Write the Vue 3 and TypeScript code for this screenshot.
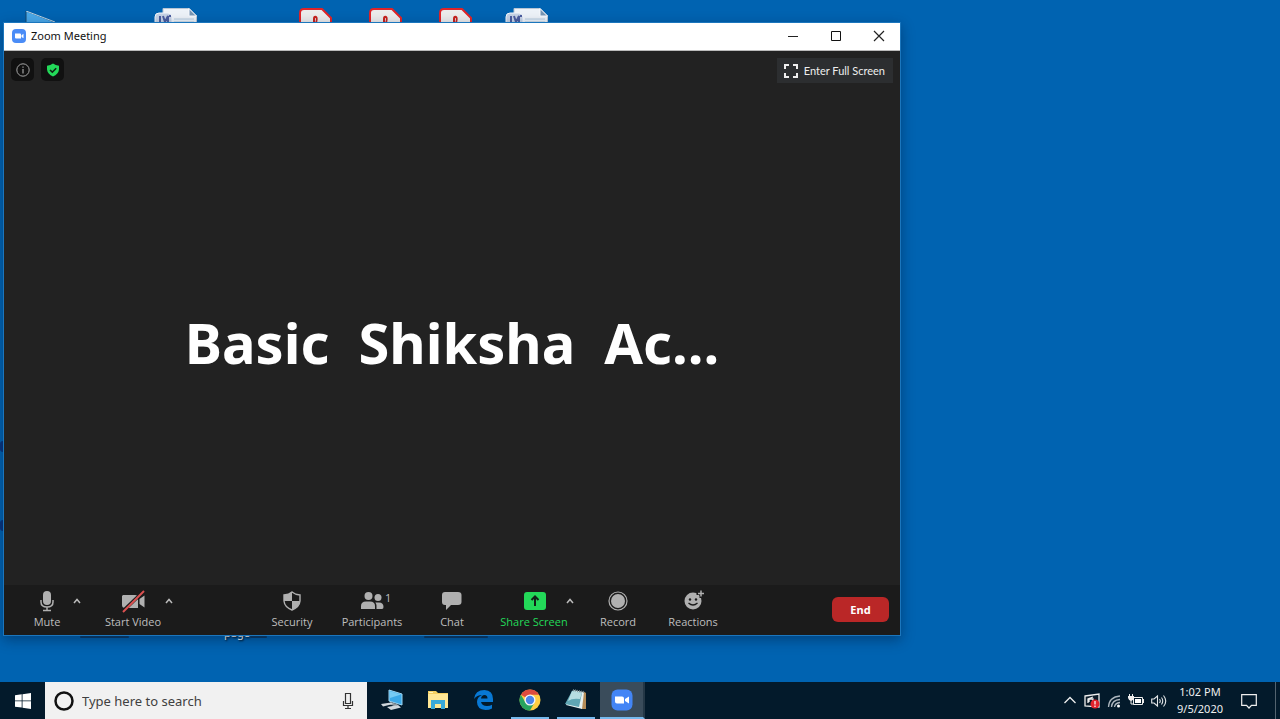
<script setup lang="ts">
import { ref } from 'vue'

const query = ref('')
const participantCount = 1
const displayName = 'Basic  Shiksha  Ac...'
const pdfShortcuts = ['pdf-one', 'pdf-two', 'pdf-three']
const wordShortcuts = ['word-one', 'word-two']
</script>

<template>
  <div class="screen">
    <main class="desktop">
      <svg class="shortcut player" width="32" height="24" viewBox="0 0 32 24">
        <path d="M1 0 32 12 1 24Z" fill="#4aa8e8" stroke="#16486f" />
        <path d="M1 0 30 11" stroke="#b9d5e8" />
      </svg>
      <svg v-for="s in wordShortcuts" :key="s" class="shortcut" :class="s" width="44" height="34" viewBox="0 0 44 34">
        <path d="M9 .5H35L42.500 8V34H9Z" fill="#edf2f8" stroke="#b8c5d4" />
        <path d="M35 .5V8H42.500Z" fill="#7896b4" stroke="#f8faff" />
        <path d="M20 11H40M20 14H40" stroke="#b4ccdf" />
        <rect x="1" y="5" width="17" height="20" rx="4" fill="#c5d2e6" stroke="#f1f5fb" />
        <path d="M6 8V14M9 8 11 14 14 8V14M15 8H17" fill="none" stroke="#4b5d9f" stroke-width="2" />
      </svg>
      <svg v-for="s in pdfShortcuts" :key="s" class="shortcut" :class="s" width="34" height="40" viewBox="0 0 34 40">
        <path d="M5 1H23L32 10V40H1V5Q1 1 5 1Z" fill="#ececec" stroke="#df2429" stroke-width="2" />
        <path d="M15 18V11Q15 8 17 9Q19 10 16 18" fill="none" stroke="#c8201d" stroke-width="2" />
      </svg>
      <span class="mark mark-a"></span>
      <span class="mark mark-b"></span>
      <span class="caption">page</span>

      <section class="window">
        <header class="titlebar">
          <svg width="14" height="14" viewBox="0 0 14 14">
            <rect width="14" height="14" rx="4" fill="#4a8cf7" />
            <path d="M3 4.500H8Q9 4.500 9 5.500V9.500H4Q3 9.500 3 8.500ZM9.500 6.200 11.500 4.800V9.200L9.500 7.900Z" fill="#fff" />
          </svg>
          <h1>Zoom Meeting</h1>
          <button class="caption-button" aria-label="Minimize">
            <svg width="12" height="12" viewBox="0 0 12 12"><path d="M1 6.500H11" stroke="#222" /></svg>
          </button>
          <button class="caption-button" aria-label="Maximize">
            <svg width="12" height="12" viewBox="0 0 12 12"><path d="M1.500 1.500H10.500V10.500H1.500Z" fill="none" stroke="#111" /></svg>
          </button>
          <button class="caption-button" aria-label="Close">
            <svg width="12" height="12" viewBox="0 0 12 12"><path d="M1 1 11 11M11 1 1 11" stroke="#222" stroke-width="1.200" /></svg>
          </button>
        </header>

        <div class="stage">
          <div class="stage-top">
            <button class="chip" aria-label="Meeting information">
              <svg width="14" height="14" viewBox="0 0 14 14">
                <circle cx="7" cy="7" r="6.200" fill="none" stroke="#a5a5a5" />
                <path d="M7 6V10.500M7 3.500V4.800" stroke="#a5a5a5" stroke-width="1.200" />
              </svg>
            </button>
            <button class="chip" aria-label="Encryption">
              <svg width="14" height="14" viewBox="0 0 14 14">
                <path d="M7 .5Q9.500 2.500 13 2.700V6.500Q12.500 11 7 13.500Q1.500 11 1 6.500V2.700Q4.500 2.500 7 .5Z" fill="#23d959" />
                <path d="M4 7 6.300 9.200 10.200 5.200" fill="none" stroke="#102015" stroke-width="1.600" />
              </svg>
            </button>
            <button class="fullscreen">
              <svg width="14" height="14" viewBox="0 0 14 14">
                <path d="M1 5V1H5M9 1H13V5M13 9V13H9M5 13H1V9" fill="none" stroke="#eee" stroke-width="2" />
              </svg>
              <span>Enter Full Screen</span>
            </button>
          </div>
          <p class="name">{{ displayName }}</p>
        </div>

        <footer class="toolbar">
          <div class="group">
            <button class="tool tool-mute">
              <svg width="24" height="24" viewBox="0 0 24 24">
                <rect x="8" y="2" width="8" height="14" rx="4" fill="#b0b0b0" />
                <path d="M6 11V13Q6 18 12 18Q18 18 18 13V11M12 18V21M8 21.500H16" fill="none" stroke="#b0b0b0" stroke-width="1.500" />
              </svg>
              <span>Mute</span>
            </button>
            <button class="caret" aria-label="Audio options">
              <svg width="8" height="6" viewBox="0 0 8 6"><path d="M1 5 4 1.500 7 5" fill="none" stroke="#bbb" stroke-width="1.500" /></svg>
            </button>
            <button class="tool tool-video">
              <svg width="26" height="24" viewBox="0 0 26 24">
                <path d="M3 6H15Q18 6 18 9V19H5Q2 19 2 16V7ZM19.500 10 24.500 6.500V18.500L19.500 15Z" fill="#b0b0b0" />
                <path d="M3 22 24 2" stroke="#1b1b1b" stroke-width="3.500" />
                <path d="M3 23 24 2" stroke="#dc5151" stroke-width="2" />
              </svg>
              <span>Start Video</span>
            </button>
            <button class="caret" aria-label="Video options">
              <svg width="8" height="6" viewBox="0 0 8 6"><path d="M1 5 4 1.500 7 5" fill="none" stroke="#bbb" stroke-width="1.500" /></svg>
            </button>
          </div>

          <div class="group group-main">
            <button class="tool">
              <svg width="24" height="24" viewBox="0 0 24 24">
                <path d="M12 3Q15 5.500 20 6V12Q19.500 18 12 21Q4.500 18 4 12V6Q9 5.500 12 3Z" fill="#1b1b1b" stroke="#b0b0b0" stroke-width="1.400" />
                <path d="M12 3V12H4V6Q9 5.500 12 3ZM12 12H20Q19.500 18 12 21Z" fill="#b0b0b0" />
              </svg>
              <span>Security</span>
            </button>
            <button class="tool">
              <span class="people">
                <svg width="24" height="24" viewBox="0 0 24 24">
                  <circle cx="8.500" cy="7" r="4" fill="#b0b0b0" />
                  <circle cx="18" cy="8.500" r="3.500" fill="#b0b0b0" />
                  <path d="M1 20V17Q1 12.500 6 12.500H10Q15 12.500 15 17V20ZM16.500 20V16.500Q16.500 15 15.300 13.500H19Q23.500 13.500 23.500 18Q23.500 20 22 20Z" fill="#b0b0b0" />
                </svg>
                <span class="count">{{ participantCount }}</span>
              </span>
              <span>Participants</span>
            </button>
            <button class="tool">
              <svg width="24" height="24" viewBox="0 0 24 24">
                <path d="M5 3H18Q21.500 3 21.500 6V13Q21.500 16 18 16H11L6 21V16H5Q2 16 2 13V6Q2 3 5 3Z" fill="#b0b0b0" />
              </svg>
              <span>Chat</span>
            </button>
            <button class="tool tool-share">
              <svg width="24" height="24" viewBox="0 0 24 24">
                <rect x="2" y="3" width="22" height="18" rx="3" fill="#23d959" />
                <path d="M13 17V8M9.500 11 13 7.500 16.500 11" fill="none" stroke="#132019" stroke-width="2" />
              </svg>
              <span>Share Screen</span>
            </button>
            <button class="caret caret-share" aria-label="Share options">
              <svg width="8" height="6" viewBox="0 0 8 6"><path d="M1 5 4 1.500 7 5" fill="none" stroke="#bbb" stroke-width="1.500" /></svg>
            </button>
            <button class="tool">
              <svg width="24" height="24" viewBox="0 0 24 24">
                <circle cx="12" cy="12" r="9" fill="none" stroke="#b0b0b0" stroke-width="1.200" />
                <circle cx="12" cy="12" r="7" fill="#b0b0b0" />
              </svg>
              <span>Record</span>
            </button>
            <button class="tool tool-reactions">
              <svg width="24" height="24" viewBox="0 0 24 24">
                <circle cx="12" cy="12" r="8.500" fill="#b0b0b0" />
                <circle cx="9" cy="10.500" r="1.200" fill="#1b1b1b" />
                <circle cx="15" cy="10.500" r="1.200" fill="#1b1b1b" />
                <path d="M7.500 14Q12 18 16.500 14" fill="none" stroke="#1b1b1b" stroke-width="1.300" />
                <path d="M20 0V9M15.500 4.500H24" stroke="#1b1b1b" stroke-width="3" />
                <path d="M20 1.500V7.500M17 4.500H23" stroke="#b0b0b0" stroke-width="1.500" />
              </svg>
              <span>Reactions</span>
            </button>
          </div>
          <button class="end">End</button>
        </footer>
      </section>
      <span class="smudge smudge-a"></span>
      <span class="smudge smudge-b"></span>
      <span class="smudge smudge-c"></span>
    </main>

    <nav class="taskbar">
      <button class="start" aria-label="Start">
        <svg width="16" height="16" viewBox="0 0 16 16">
          <path d="M0 2.300 6.700 1.300V7.500H0ZM7.500 1.200 16 0V7.500H7.500ZM0 8.300H6.700V14.600L0 13.700ZM7.500 8.300H16V16L7.500 14.700Z" fill="#fff" />
        </svg>
      </button>
      <label class="search">
        <svg width="22" height="22" viewBox="0 0 22 22"><circle cx="11" cy="11" r="8.500" fill="none" stroke="#111" stroke-width="2.500" /></svg>
        <input v-model="query" type="text" placeholder="Type here to search" aria-label="Type here to search" />
        <svg width="12" height="18" viewBox="0 0 12 18">
          <path d="M3.500 1.500H8.500V11.500H3.500ZM1.500 9V13.500H10.500V9M6 13.500V16M3 16.500H9" fill="none" stroke="#333" stroke-width="1.200" />
        </svg>
      </label>

      <div class="apps">
        <button class="app" aria-label="This PC">
          <svg width="24" height="22" viewBox="0 0 24 22">
            <path d="M9 1 22 5V16L9 12Z" fill="#3ba9e8" stroke="#9ed5f2" />
            <path d="M9.500 2 21 5.500 10 9Z" fill="#75cbf5" />
            <path d="M11 13 18 15.500 15 17.500 9 15Z" fill="#8b969e" />
            <path d="M1 15 11 13.500 13 15 3 17.500ZM7 18 18 16 21 18.500 11 21Z" fill="#d0d7dc" />
          </svg>
        </button>
        <button class="app" aria-label="File Explorer">
          <svg width="22" height="20" viewBox="0 0 22 20">
            <path d="M1 1H9L11 3H21V18H1Z" fill="#f4cf61" />
            <path d="M1 4H21V18H1Z" fill="#ffe795" />
            <path d="M4 10H18V19H14V14H8V19H4Z" fill="#39a9d9" />
            <path d="M2 2.500H6" stroke="#fff4be" />
          </svg>
        </button>
        <button class="app" aria-label="Edge">
          <svg width="20" height="20" viewBox="0 0 20 20">
            <path d="M0 9Q1 0 10.500 0Q19 .5 19 9V12H7Q8 16 13 16Q16 16 18 14.700V18.500Q15 20 11.500 20Q3 19.500 3 12Q3 7 8 5Q3 5 0 9ZM7 8.500H13.500Q13.500 5 10.500 5Q7.500 5 7 8.500Z" fill="#0878d4" fill-rule="evenodd" />
          </svg>
        </button>
        <button class="app running" aria-label="Chrome">
          <svg width="22" height="22" viewBox="0 0 22 22">
            <circle cx="11" cy="11" r="10.500" fill="#ffcd42" />
            <path d="M11 11 1.900 5.750A10.500 10.500 0 0 1 20.100 5.750H11Z" fill="#dd4b3e" />
            <path d="M1.900 5.750A10.500 10.500 0 0 0 11 21.500L15.500 13.600 6.500 13.600Z" fill="#27a35f" />
            <circle cx="11" cy="11" r="5.500" fill="#f5f5f5" />
            <circle cx="11" cy="11" r="4.200" fill="#4a84e8" />
          </svg>
        </button>
        <button class="app running" aria-label="Notepad">
          <svg width="24" height="22" viewBox="0 0 24 22">
            <path d="M19 2 22 4V20L17 20Z" fill="#b58c58" />
            <path d="M9 1 20 3 18 20 2 16Z" fill="#e7f2f2" />
            <path d="M8 2 18 4 15 18 1 15Z" fill="#5fa6b4" />
            <path d="M8 2 18 4 16 10Q8 9 4 12Z" fill="#b6dce1" />
            <path d="M9 1 20 3" stroke="#677f86" stroke-width="2" stroke-dasharray="1 1" />
          </svg>
        </button>
        <button class="app running active" aria-label="Zoom">
          <svg width="22" height="22" viewBox="0 0 22 22">
            <rect x=".5" y=".5" width="21" height="21" rx="6" fill="#4385f5" />
            <path d="M4 7.500H11Q13 7.500 13 9.500V14.500H6Q4 14.500 4 12.500ZM14 10 18 7.500V14.500L14 12Z" fill="#fff" />
          </svg>
        </button>
      </div>

      <div class="tray">
        <button class="tray-item" aria-label="Show hidden icons">
          <svg width="14" height="16" viewBox="0 0 14 16"><path d="M1.500 10 7 4.500 12.500 10" fill="none" stroke="#eee" stroke-width="1.300" /></svg>
        </button>
        <button class="tray-item" aria-label="Update alert">
          <svg width="16" height="16" viewBox="0 0 16 16">
            <path d="M1 3 15 1V14L1 13Z" fill="#0c1c29" stroke="#eee" stroke-width="1.300" />
            <path d="M4 10V6L9 4M5 6V9M5 6H9V9" fill="none" stroke="#eee" stroke-width="1.300" />
            <circle cx="11" cy="11" r="4.500" fill="#df232d" />
            <path d="M11 8V11.500M11 12.500V14" stroke="#fff" stroke-width="1.200" />
          </svg>
        </button>
        <button class="tray-item" aria-label="Wi-Fi">
          <svg width="14" height="16" viewBox="0 0 14 16">
            <path d="M1.500 14Q2 4 13 3M4.500 14Q5 7 13 6.500M7.500 14Q8 10 13 9.500" fill="none" stroke="#aeb7bf" stroke-width="1.300" />
            <circle cx="11.500" cy="13" r="1.500" fill="#fff" />
          </svg>
        </button>
        <button class="tray-item" aria-label="Battery">
          <svg width="16" height="16" viewBox="0 0 16 16">
            <path d="M5.500 4.500H14.500V11.500H5.500ZM15.500 6V10" fill="none" stroke="#eee" />
            <path d="M7 6H13V10H7Z" fill="#fff" />
            <path d="M1.500 1V4M4.500 1V4M3 7V11H6" stroke="#eee" fill="none" />
            <path d="M0 3H6V5Q5 8 3 8Q1 8 0 5Z" fill="#eee" />
          </svg>
        </button>
        <button class="tray-item" aria-label="Volume">
          <svg width="16" height="16" viewBox="0 0 16 16">
            <path d="M.7 6H3L6.500 3V13L3 10H.7ZM8.500 6Q10 8 8.500 10M10.500 4.500Q13 8 10.500 11.500M12.500 2.500Q17 8 12.500 13.500" fill="none" stroke="#e4e7e9" stroke-width="1.100" />
          </svg>
        </button>
      </div>
      <time class="clock" datetime="2020-09-05T13:02"><span>1:02 PM</span><span>9/5/2020</span></time>
      <button class="notice" aria-label="Notifications">
        <svg width="16" height="16" viewBox="0 0 16 16"><path d="M.7 1.700H15.300V12.300H10.500L8 15 5.500 12.300H.7Z" fill="none" stroke="#eee" stroke-width="1.200" /></svg>
      </button>
      <button class="peek" aria-label="Show desktop"></button>
    </nav>
  </div>
</template>

<style>
body {
  margin: 0;
}
</style>

<style scoped>
.screen {
  display: flex;
  flex-direction: column;
  height: 100vh;
  overflow: hidden;
  background: #0063b1;
  font-family: "Noto Sans", "Open Sans", sans-serif;
  font-size: 11px;
}
.screen * {
  box-sizing: border-box;
}
svg {
  display: block;
  flex: none;
}
button {
  display: flex;
  align-items: center;
  justify-content: center;
  padding: 0;
  border: 0;
  background: none;
  color: inherit;
  font: inherit;
  white-space: nowrap;
}
.desktop {
  position: relative;
  flex: 1;
}
.shortcut {
  position: absolute;
  top: 8px;
}
.player { left: 25px; top: 11px; }
.word-one { left: 154px; }
.word-two { left: 505px; }
.pdf-one { left: 299px; }
.pdf-two { left: 369px; }
.pdf-three { left: 439px; }
.mark {
  position: absolute;
  left: 0;
  width: 3px;
  height: 11px;
  border-radius: 3px 0 0 3px;
  background: #08357f;
}
.mark-a { top: 441px; }
.mark-b { top: 520px; }
.smudge {
  position: absolute;
  top: 636px;
  height: 2px;
  border-radius: 1px;
  background: #07325c;
}
.smudge-a { left: 80px; width: 49px; }
.smudge-b { left: 250px; width: 17px; }
.smudge-c { left: 424px; width: 64px; }
.caption {
  position: absolute;
  top: 625px;
  left: 224px;
  color: #fff;
  line-height: 16px;
  text-shadow: 1px 1px 2px #000;
}
.window {
  position: absolute;
  top: 22px;
  right: 379px;
  bottom: 46px;
  left: 3px;
  display: flex;
  flex-direction: column;
  border: 1px solid #1b76bd;
  background: #222;
  box-shadow: 0 4px 12px rgba(0, 20, 50, 0.4);
}
.titlebar {
  display: flex;
  align-items: center;
  height: 28px;
  padding: 0 0 2px 8px;
  border-bottom: 1px solid #bbb;
  background: #fff;
  color: #111;
}
.titlebar h1 {
  flex: 1;
  margin: 0 0 0 5px;
  font-size: 11px;
  font-weight: 400;
  line-height: 16px;
}
.caption-button {
  width: 43px;
  height: 25px;
}
.stage {
  display: flex;
  flex: 1;
  flex-direction: column;
  color: #fff;
}
.stage-top {
  display: flex;
  gap: 8px;
  padding: 7px 7px 0;
}
.chip {
  width: 23px;
  height: 23px;
  border-radius: 5px;
  background: #111;
}
.chip + .chip {
  margin-left: -1px;
}
.fullscreen {
  gap: 6px;
  height: 25px;
  margin-left: auto;
  padding: 0 8px 0 7px;
  background: #2c2e30;
  color: #eee;
  font-family: Lato, sans-serif;
}
.name {
  margin: auto;
  padding-top: 16px;
  font-size: 56px;
  font-weight: 700;
  line-height: 72px;
  white-space: pre;
}
.toolbar {
  display: flex;
  align-items: flex-start;
  height: 50px;
  padding: 0 11px 0 21px;
  background: #1b1b1b;
  color: #bebebe;
}
.group {
  display: flex;
  align-items: flex-start;
  padding-top: 4px;
}
.group-main {
  margin-left: 75px;
}
.tool {
  flex-direction: column;
  width: 80px;
  font-weight: 400;
  line-height: 18px;
  font-family: "Open Sans", sans-serif;
}
.tool-mute { width: 44px; }
.tool-video { width: 56px; margin-left: 20px; }
.tool-share { width: 84px; color: #23d959; }
.tool-reactions { width: 70px; }
.caret {
  width: 16px;
  height: 24px;
}
.caret-share {
  margin-left: -14px;
}
.people {
  position: relative;
}
.count {
  position: absolute;
  top: 2px;
  left: 25px;
  line-height: 14px;
}
.end {
  width: 57px;
  height: 25px;
  margin: 12px 0 0 auto;
  padding-bottom: 1px;
  border-radius: 6px;
  background: #ba2727;
  color: #fff;
  font-weight: 700;
}
.taskbar {
  display: flex;
  align-items: stretch;
  height: 37px;
  background: #031a2b;
  color: #eee;
}
.start {
  width: 45px;
}
.search {
  display: flex;
  align-items: center;
  width: 322px;
  padding: 0 13px 0 8px;
  background: #f1f1f1;
}
.search input {
  flex: 1;
  min-width: 0;
  margin-left: 7px;
  padding: 0;
  border: 0;
  outline: 0;
  background: none;
  color: #333;
  font: inherit;
  font-size: 13px;
}
.search input::placeholder {
  color: #404040;
  opacity: 1;
}
.apps {
  display: flex;
  gap: 8px;
  margin-left: 6px;
}
.app {
  width: 38px;
  border-bottom: 2px solid transparent;
}
.running {
  border-bottom-color: #76b9ed;
}
.active {
  width: 45px;
  margin-left: -3px;
  border-right: 2px solid #243746;
  background: #3a4c5b;
}
.tray {
  display: flex;
  gap: 7px;
  margin-left: auto;
}
.clock {
  display: flex;
  flex-direction: column;
  align-items: center;
  justify-content: center;
  width: 66px;
  padding-bottom: 2px;
  line-height: 17px;
}
.notice {
  width: 31px;
}
.peek {
  width: 5px;
  margin-left: 11px;
  border-left: 1px solid #53636f;
}
</style>
